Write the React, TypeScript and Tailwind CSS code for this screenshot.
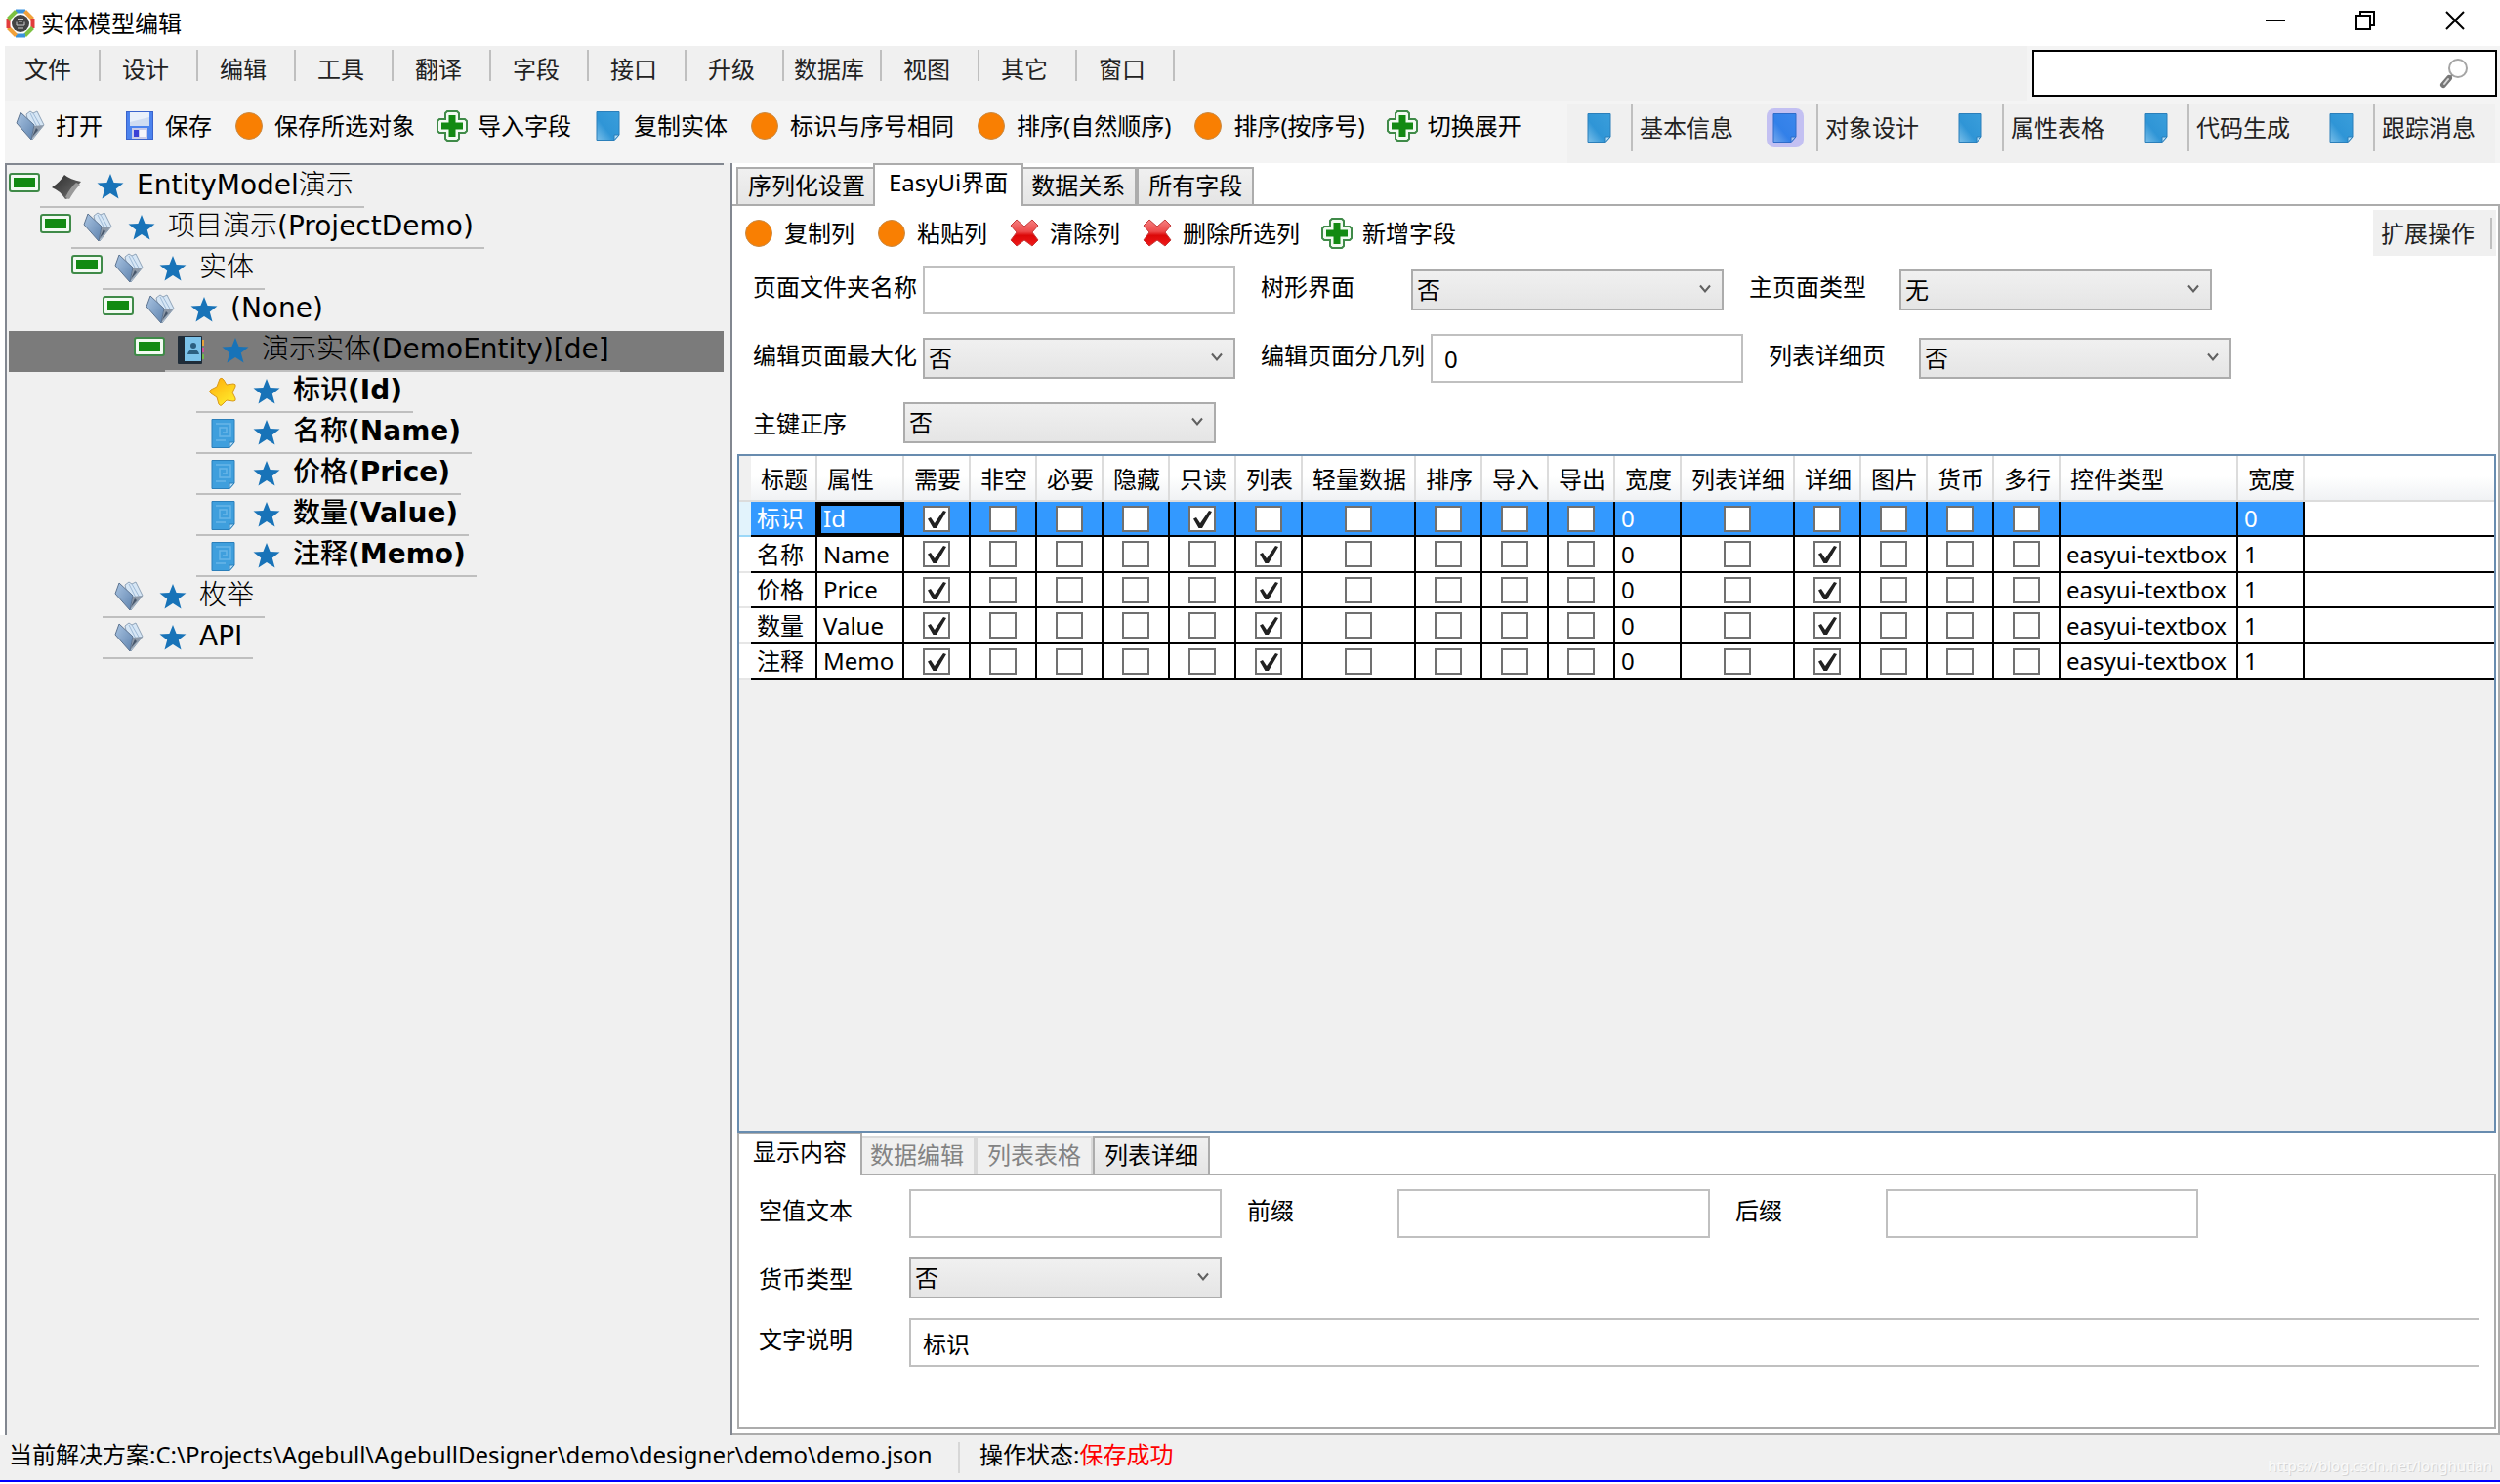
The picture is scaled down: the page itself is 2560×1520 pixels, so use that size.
import { useId, useState } from "react";
import type { ReactNode } from "react";
import { clsx } from "clsx";

type IconProps = { className?: string };

const LogoIcon = () => (
  <svg viewBox="0 0 30 30" className="size-[30px] shrink-0" aria-hidden="true">
    <g fill="none" strokeWidth="4">
      <path d="M10 2.500H20" stroke="#3a93dc" />
      <path d="M19.500 2.500L27.500 10.500" stroke="#f0a03a" />
      <path d="M27.500 10V20" stroke="#e23c3c" />
      <path d="M27.500 19.500L19.500 27.500" stroke="#7cc142" />
      <path d="M20 27.500H10" stroke="#3a93dc" />
      <path d="M10.500 27.500L2.500 19.500" stroke="#f0a03a" />
      <path d="M2.500 20V10" stroke="#e23c3c" />
      <path d="M2.500 10.500L10.500 2.500" stroke="#7cc142" />
    </g>
    <circle cx="15" cy="15" r="9" fill="#444" />
    <path d="M12 10.500H18M11 13.500V17H19V13.500M13 13H17M12 20H18" fill="none" stroke="#c8c8c8" strokeWidth="1" />
  </svg>
);

const FolderIcon = ({ className }: IconProps) => (
  <svg viewBox="0 0 32 32" className={clsx("size-8 shrink-0", className)} aria-hidden="true">
    <defs>
      <linearGradient id="folderCover" x1="0" y1="0" x2="1" y2="1">
        <stop offset="0" stopColor="#a9c4e2" />
        <stop offset="1" stopColor="#5f83ae" />
      </linearGradient>
    </defs>
    <path d="M12 4L16 1L19 3L23 1L30 15L18 30Z" fill="#d6e6f5" stroke="#8fa3b8" strokeWidth="1" />
    <path d="M16 3L24 19M19 3L27 17" stroke="#9db9d6" strokeWidth="1" />
    <path d="M20 16L30 15L17 30Z" fill="#8d99a8" />
    <path d="M22 18L24 20L18 27Z" fill="#46566b" />
    <path d="M6 2L20 15L17 30L2 13Z" fill="url(#folderCover)" stroke="#5d7491" strokeWidth="1" />
  </svg>
);

const SaveIcon = () => (
  <svg viewBox="0 0 32 32" className="size-8 shrink-0" aria-hidden="true">
    <rect x="2.500" y="1.500" width="27" height="28" fill="#4c83ee" stroke="#3a63cc" />
    <rect x="6" y="2" width="20" height="14" fill="#e9f0fb" />
    <path d="M6 12L26 7V16H6Z" fill="#cfdcf2" />
    <rect x="8" y="18" width="16" height="11" fill="#c9cbe9" />
    <rect x="10" y="20" width="5" height="7" fill="#3b3fd6" />
    <rect x="16" y="20" width="6" height="7" fill="#f5f5fb" />
  </svg>
);

const DotIcon = () => (
  <svg viewBox="0 0 32 32" className="size-8 shrink-0" aria-hidden="true">
    <circle cx="16" cy="16" r="13.500" fill="#f97f02" stroke="#c98a45" strokeWidth="1" />
  </svg>
);

const PlusIcon = () => (
  <svg viewBox="0 0 32 32" className="size-8 shrink-0" aria-hidden="true">
    <path
      d="M11 1H21L23 3V9H29L31 11V21L29 23H23V29L21 31H11L9 29V23H3L1 21V11L3 9H9V3Z"
      fill="#f2faf2"
      stroke="#3f8a48"
      strokeWidth="2"
    />
    <path d="M12.500 5H19.500V12.500H27V19.500H19.500V27H12.500V19.500H5V12.500H12.500Z" fill="#128a12" />
  </svg>
);

const CrossIcon = () => (
  <svg viewBox="0 0 32 32" className="size-8 shrink-0" aria-hidden="true">
    <defs>
      <linearGradient id="crossFill" x1="0" y1="0" x2="0" y2="1">
        <stop offset="0" stopColor="#f58080" />
        <stop offset="0.450" stopColor="#ee4a4a" />
        <stop offset="0.600" stopColor="#dc0808" />
        <stop offset="1" stopColor="#f01a1a" />
      </linearGradient>
    </defs>
    <path
      d="M8 2L16 9L24 2L30 8L24 15L30 23L24 29L16 23L8 29L2 23L8 15L2 8Z"
      fill="url(#crossFill)"
      stroke="#c43a3a"
      strokeWidth="1"
      strokeLinejoin="round"
    />
  </svg>
);

const PageIcon = ({ className }: IconProps) => (
  <svg viewBox="0 0 32 32" className={clsx("size-8 shrink-0", className)} aria-hidden="true">
    <defs>
      <linearGradient id="pageFill" x1="0" y1="1" x2="1" y2="0">
        <stop offset="0" stopColor="#7cc0ea" />
        <stop offset="0.400" stopColor="#2f95d6" />
        <stop offset="1" stopColor="#3a9edb" />
      </linearGradient>
    </defs>
    <path d="M4 1.500H27V25L22 30.500H4Z" fill="url(#pageFill)" stroke="#2b7fba" strokeWidth="1" />
    <path d="M22 30.500V25H27Z" fill="#b5dcf4" stroke="#2b7fba" strokeWidth="1" />
  </svg>
);

const NoteIcon = () => (
  <svg viewBox="0 0 32 32" className="size-8 shrink-0" aria-hidden="true">
    <path d="M5 2.500H28V26L23 31.500H5Z" fill="#3f9fdd" stroke="#2b7fba" strokeWidth="1" />
    <path d="M23 31.500V26H28Z" fill="#b5dcf4" stroke="#2b7fba" strokeWidth="1" />
    <path d="M9 7H24V20H13V11H20V16H16M9 24H19" fill="none" stroke="#69b6e8" strokeWidth="1.500" />
  </svg>
);

const SolutionIcon = () => (
  <svg viewBox="0 0 32 32" className="size-8 shrink-0" aria-hidden="true">
    <defs>
      <linearGradient id="solutionFill" x1="0" y1="0" x2="1" y2="1">
        <stop offset="0" stopColor="#2d2d2d" />
        <stop offset="0.600" stopColor="#555" />
        <stop offset="1" stopColor="#8a8a8a" />
      </linearGradient>
    </defs>
    <path d="M14 4Q20 9 31 11Q25 17 19 28L15 29Q9 20 1 17Q9 12 14 4Z" fill="url(#solutionFill)" />
    <path d="M30 14Q25 19 19 29L15 27Q20 17 26 12Z" fill="#9a9a9a" />
  </svg>
);

const BookIcon = () => (
  <svg viewBox="0 0 32 32" className="size-8 shrink-0" aria-hidden="true">
    <path d="M26 5H29V11H26Z" fill="#e8a33a" />
    <path d="M26 13H29V18H26Z" fill="#cf4f9a" />
    <path d="M26 20H29V25H26Z" fill="#76b74a" />
    <rect x="2" y="1" width="25" height="29" rx="1" fill="#1f2c38" />
    <rect x="9" y="2" width="17" height="25" fill="#7cc3ea" />
    <circle cx="18" cy="11" r="3" fill="#2c5f80" />
    <path d="M12 20Q13 15 18 15Q23 15 24 20Z" fill="#2c5f80" />
  </svg>
);

const GoldStarIcon = () => (
  <svg viewBox="0 0 32 32" className="size-8 shrink-0" aria-hidden="true">
    <defs>
      <linearGradient id="goldFill" x1="0" y1="0" x2="0.600" y2="1">
        <stop offset="0" stopColor="#ffab0a" />
        <stop offset="1" stopColor="#ffe82a" />
      </linearGradient>
    </defs>
    <path
      d="M13 3Q15 1 17 4L20 9L27 8Q30 8 29 11L26 17L29 23Q30 26 27 26L20 25L16 29Q14 32 12 29L10 22L4 18Q1 16 4 14L10 11Z"
      fill="url(#goldFill)"
      stroke="#d99a1c"
      strokeWidth="1"
      strokeLinejoin="round"
    />
  </svg>
);

const BlueStarIcon = () => (
  <svg viewBox="0 0 28 28" className="size-7 shrink-0" aria-hidden="true">
    <path d="M14 1L17.600 10L27.500 10.500L19.800 16.600L22.500 26.500L14 21L5.500 26.500L8.200 16.600L0.500 10.500L10.400 10Z" fill="#1873b8" />
  </svg>
);

const CollapseIcon = () => (
  <svg viewBox="0 0 32 20" className="h-5 w-8" aria-hidden="true">
    <rect x="1" y="1" width="30" height="18" rx="2" fill="#f2faf2" stroke="#3f8a48" strokeWidth="2" />
    <rect x="5" y="5" width="22" height="10" fill="#128a12" />
  </svg>
);

const SearchIcon = () => (
  <svg viewBox="0 0 32 34" className="h-[34px] w-8" aria-hidden="true">
    <circle cx="20" cy="12" r="9" fill="#fff" stroke="#a5a5a5" strokeWidth="2" />
    <path d="M14 19L10 23" stroke="#8a8a8a" strokeWidth="2" />
    <path d="M11 22L5 29" stroke="#777" strokeWidth="6" strokeLinecap="round" />
    <path d="M10 23L6 28" stroke="#d8d8d8" strokeWidth="2" strokeLinecap="round" />
  </svg>
);

const menus = ["文件", "设计", "编辑", "工具", "翻译", "字段", "接口", "升级", "数据库", "视图", "其它", "窗口"];

const mainActions = [
  { text: "打开", icon: <FolderIcon /> },
  { text: "保存", icon: <SaveIcon /> },
  { text: "保存所选对象", icon: <DotIcon /> },
  { text: "导入字段", icon: <PlusIcon /> },
  { text: "复制实体", icon: <PageIcon /> },
  { text: "标识与序号相同", icon: <DotIcon /> },
  { text: "排序(自然顺序)", icon: <DotIcon /> },
  { text: "排序(按序号)", icon: <DotIcon /> },
  { text: "切换展开", icon: <PlusIcon /> },
];

const views = ["基本信息", "对象设计", "属性表格", "代码生成", "跟踪消息"];

const columnActions = [
  { text: "复制列", icon: <DotIcon /> },
  { text: "粘贴列", icon: <DotIcon /> },
  { text: "清除列", icon: <CrossIcon /> },
  { text: "删除所选列", icon: <CrossIcon /> },
  { text: "新增字段", icon: <PlusIcon /> },
];

const tree = [
  { indent: "pl-0", label: "", latin: "EntityModel", tail: "演示", icon: <SolutionIcon />, open: true },
  { indent: "pl-8", label: "项目演示", latin: "(ProjectDemo)", icon: <FolderIcon />, open: true },
  { indent: "pl-16", label: "实体", latin: "", icon: <FolderIcon />, open: true },
  { indent: "pl-24", label: "", latin: "(None)", icon: <FolderIcon />, open: true, plain: true },
  { indent: "pl-32", label: "演示实体", latin: "(DemoEntity)[de]", icon: <BookIcon />, open: true, selected: true },
  { indent: "pl-40", label: "标识", latin: "(Id)", icon: <GoldStarIcon />, field: true },
  { indent: "pl-40", label: "名称", latin: "(Name)", icon: <NoteIcon />, field: true },
  { indent: "pl-40", label: "价格", latin: "(Price)", icon: <NoteIcon />, field: true },
  { indent: "pl-40", label: "数量", latin: "(Value)", icon: <NoteIcon />, field: true },
  { indent: "pl-40", label: "注释", latin: "(Memo)", icon: <NoteIcon />, field: true },
  { indent: "pl-16", label: "枚举", latin: "", icon: <FolderIcon /> },
  { indent: "pl-16", label: "", latin: "API", icon: <FolderIcon /> },
];

const columns = [
  { key: "caption", title: "标题", width: "w-[68px]" },
  { key: "name", title: "属性", width: "w-[89px]" },
  { key: "need", title: "需要", width: "w-[68px]", check: true },
  { key: "notNull", title: "非空", width: "w-[68px]", check: true },
  { key: "required", title: "必要", width: "w-[68px]", check: true },
  { key: "hidden", title: "隐藏", width: "w-[68px]", check: true },
  { key: "readonly", title: "只读", width: "w-[68px]", check: true },
  { key: "list", title: "列表", width: "w-[68px]", check: true },
  { key: "light", title: "轻量数据", width: "w-[116px]", check: true },
  { key: "sort", title: "排序", width: "w-[68px]", check: true },
  { key: "import", title: "导入", width: "w-[68px]", check: true },
  { key: "export", title: "导出", width: "w-[68px]", check: true },
  { key: "listWidth", title: "宽度", width: "w-[68px]" },
  { key: "listDetail", title: "列表详细", width: "w-[116px]", check: true },
  { key: "detail", title: "详细", width: "w-[68px]", check: true },
  { key: "image", title: "图片", width: "w-[68px]", check: true },
  { key: "money", title: "货币", width: "w-[68px]", check: true },
  { key: "multiLine", title: "多行", width: "w-[68px]", check: true },
  { key: "control", title: "控件类型", width: "w-[182px]" },
  { key: "span", title: "宽度", width: "w-[68px]" },
];

const rows = [
  { caption: "标识", name: "Id", listWidth: "0", control: "", span: "0", checked: ["need", "readonly"] },
  { caption: "名称", name: "Name", listWidth: "0", control: "easyui-textbox", span: "1", checked: ["need", "list", "detail"] },
  { caption: "价格", name: "Price", listWidth: "0", control: "easyui-textbox", span: "1", checked: ["need", "list", "detail"] },
  { caption: "数量", name: "Value", listWidth: "0", control: "easyui-textbox", span: "1", checked: ["need", "list", "detail"] },
  { caption: "注释", name: "Memo", listWidth: "0", control: "easyui-textbox", span: "1", checked: ["need", "list", "detail"] },
];

const ActionButton = ({ icon, text }: { icon: ReactNode; text: string }) => (
  <button type="button" className="flex items-center gap-[10px] whitespace-nowrap">
    {icon}
    <span>{text}</span>
  </button>
);

type Tab = { text: string; disabled?: boolean };

const TabStrip = ({ tabs, initial }: { tabs: Tab[]; initial: number }) => {
  const [active, setActive] = useState(initial);

  return (
    <div role="tablist" className="relative z-10 flex h-[42px] shrink-0 items-end pl-1">
      {tabs.map((tab, i) => (
        <button
          key={tab.text}
          type="button"
          role="tab"
          aria-selected={i === active}
          disabled={tab.disabled}
          onClick={() => setActive(i)}
          className={clsx(
            "border-2 border-b-0 whitespace-nowrap",
            i === active && "relative z-10 -mx-1 -mb-[2px] h-11 border-[#acacac] bg-white px-[14px] pb-[6px]",
            i !== active && "h-[38px] px-[10px] pb-[2px]",
            i !== active && !tab.disabled && "border-[#acacac] bg-linear-to-b from-[#f0f0f0] to-[#e5e5e5]",
            tab.disabled && "border-[#d9d9d9] bg-[#f0f0f0] text-[#838383]"
          )}
        >
          {tab.text}
        </button>
      ))}
    </div>
  );
};

const Field = ({ label, children }: { label: string; children: (id: string) => ReactNode }) => {
  const id = useId();
  return (
    <div className="flex items-center">
      <label htmlFor={id} className="min-w-[154px] self-start pt-[6px] pr-[6px] whitespace-nowrap">
        {label}
      </label>
      {children(id)}
    </div>
  );
};

const TextField = ({ label, value = "" }: { label: string; value?: string }) => (
  <Field label={label}>
    {(id) => (
      <input id={id} type="text" defaultValue={value} className="h-[50px] w-80 border-2 border-[#c0c0c0] bg-white px-3 outline-none" />
    )}
  </Field>
);

const SelectField = ({ label, value }: { label: string; value: string }) => (
  <Field label={label}>
    {(id) => (
      <div className="relative">
        <select
          id={id}
          defaultValue={value}
          className="block h-[42px] w-80 appearance-none border-2 border-[#acacac] bg-linear-to-b from-[#f0f0f0] to-[#e5e5e5] px-1 outline-none"
        >
          <option>{value}</option>
        </select>
        <svg viewBox="0 0 12 10" className="pointer-events-none absolute top-[15px] right-[13px] h-[10px] w-3" aria-hidden="true">
          <path d="M1 1.500L6 7.500L11 1.500" fill="none" stroke="#606060" strokeWidth="2" />
        </svg>
      </div>
    )}
  </Field>
);

const CheckBox = ({ label, checked }: { label: string; checked: boolean }) => (
  <span className="relative mx-auto block h-[27px] w-7">
    <input
      type="checkbox"
      aria-label={label}
      defaultChecked={checked}
      className="peer block h-[27px] w-7 appearance-none border-2 border-[#707070] bg-white"
    />
    <svg viewBox="0 0 28 27" className="pointer-events-none absolute inset-0 hidden peer-checked:block" aria-hidden="true">
      <path d="M5 13.500L8 12L12 18L21 5L24 6L14 23H10.500Z" fill="#212121" />
    </svg>
  </span>
);

const TreePanel = () => (
  <aside className="flex w-[743px] shrink-0 bg-[#f0f0f0] pr-[7px]">
    <ul className="flex-1 border-t-2 border-l-2 border-[#828790] pt-[2px] pl-[2px] font-['DejaVu_Sans','Noto_Sans_CJK_SC',sans-serif] text-[28px] leading-8">
      {tree.map((node) => (
        <li key={node.label + node.latin} className={clsx("flex h-[42px]", node.indent, node.selected && "bg-[#7b7b7b]")}>
          <span className="w-8 shrink-0 pt-[6px]">
            {node.open && (
              <button type="button" aria-label="折叠" className="block">
                <CollapseIcon />
              </button>
            )}
          </span>
          <div className={clsx("flex items-center border-b-2 pr-[11px] pl-[11px]", node.plain ? "border-transparent" : "border-[#bfbfbf]")}>
            {node.icon}
            <span className="pr-[13px] pl-[15px]">
              <BlueStarIcon />
            </span>
            <span className="pb-[2px] whitespace-nowrap">
              {node.label && <span className={clsx(node.field ? "font-medium" : "font-light")}>{node.label}</span>}
              {node.latin && <span className={clsx(node.field && "font-bold")}>{node.latin}</span>}
              {node.tail && <span className="font-light">{node.tail}</span>}
            </span>
          </div>
        </li>
      ))}
    </ul>
  </aside>
);

const FieldGrid = () => (
  <div className="flex-1 border-2 border-[#688caf] bg-[#f0f0f0]">
    <table className="w-full table-fixed border-separate border-spacing-0 text-left leading-7">
      <colgroup>
        <col className="w-3" />
        {columns.map((col) => (
          <col key={col.key} className={col.width} />
        ))}
        <col />
      </colgroup>
      <thead>
        <tr className="h-[47px]">
          <th className="border-b-2 border-[#dcdcdc] bg-[#f0f0f0] p-0" aria-label="行" />
          {columns.map((col) => (
            <th
              key={col.key}
              scope="col"
              className="border-r-2 border-b-2 border-[#dcdcdc] bg-linear-to-b from-white from-45% to-[#f0f2f4] p-0 pt-[2px] pl-[10px] font-normal whitespace-nowrap"
            >
              {col.title}
            </th>
          ))}
          <th className="border-b-2 border-[#dcdcdc] bg-linear-to-b from-white from-45% to-[#f0f2f4] p-0" aria-label="空" />
        </tr>
      </thead>
      <tbody>
        {rows.map((row, i) => (
          <tr key={row.name} className={clsx("h-9 even:h-[37px]", i === 0 ? "text-white" : "text-black")}>
            <td className={clsx("border-b-2 p-0", i === 0 ? "border-[#9cd8f8] bg-[#e2f3fc]" : "border-[#e6e6e6] bg-white")} />
            {columns.map((col) => (
              <td
                key={col.key}
                className={clsx(
                  "border-r-2 border-b-2 border-black p-0 whitespace-nowrap",
                  i === 0 ? "bg-[#3399ff]" : "bg-white",
                  i === 0 && col.key === "name" && "outline-4 -outline-offset-4 outline-black",
                  !col.check && "pl-[6px]"
                )}
              >
                {col.check ? (
                  <CheckBox label={`${row.caption} ${col.title}`} checked={row.checked.includes(col.key)} />
                ) : (
                  row[col.key as "caption" | "name" | "listWidth" | "control" | "span"]
                )}
              </td>
            ))}
            <td className="border-b-2 border-black bg-white p-0" />
          </tr>
        ))}
      </tbody>
    </table>
  </div>
);

const DetailPanel = () => (
  <section>
    <TabStrip
      initial={0}
      tabs={[{ text: "显示内容" }, { text: "数据编辑", disabled: true }, { text: "列表表格", disabled: true }, { text: "列表详细" }]}
    />
    <div className="flex flex-col gap-5 border-2 border-[#acacac] pt-[14px] pb-[62px] pl-5">
      <div className="flex flex-wrap gap-x-[26px]">
        <TextField label="空值文本" />
        <TextField label="前缀" />
        <TextField label="后缀" />
      </div>
      <SelectField label="货币类型" value="否" />
      <div className="flex items-center pr-[15px]">
        <label htmlFor="remark" className="min-w-[154px] self-start pt-[6px] pr-[6px]">
          文字说明
        </label>
        <input
          id="remark"
          type="text"
          defaultValue="标识"
          className="h-[50px] min-w-0 flex-1 border-2 border-r-0 border-[#c0c0c0] bg-white px-3 outline-none"
        />
      </div>
    </div>
  </section>
);

const App = () => {
  return (
    <div className="flex min-h-screen flex-col bg-white pb-[2px] font-['Noto_Sans','Noto_Sans_CJK_SC',sans-serif] text-[24px] leading-8 text-black">
      <header className="flex h-[47px] items-center gap-[6px] pl-[6px]">
        <LogoIcon />
        <h1>实体模型编辑</h1>
        <div className="ml-auto flex h-full items-start pt-[11px]">
          <button type="button" aria-label="最小化" className="flex w-[92px] justify-center">
            <svg viewBox="0 0 20 20" className="size-5" aria-hidden="true">
              <path d="M0 10H20" stroke="#000" strokeWidth="2" />
            </svg>
          </button>
          <button type="button" aria-label="还原" className="flex w-[92px] justify-center">
            <svg viewBox="0 0 20 20" className="size-5" aria-hidden="true">
              <path d="M1 5H15V19H1ZM5 5V1H19V15H15" fill="none" stroke="#000" strokeWidth="2" />
            </svg>
          </button>
          <button type="button" aria-label="关闭" className="flex w-[92px] justify-center">
            <svg viewBox="0 0 20 20" className="size-5" aria-hidden="true">
              <path d="M1 1L19 19M19 1L1 19" stroke="#000" strokeWidth="2" />
            </svg>
          </button>
        </div>
      </header>

      <div className="ml-[5px] flex bg-[#f4f4f4]">
        <nav className="flex h-14 flex-1 items-start bg-[#f0f0f0] pt-1 text-[#222]">
          {menus.map((menu) => (
            <div key={menu} className="flex h-8 items-center">
              <button type="button" className="w-[88px] pt-2 text-center whitespace-nowrap">
                {menu}
              </button>
              <span className="mr-[2px] ml-2 h-8 w-[2px] bg-[#bfbfbf]" />
            </div>
          ))}
        </nav>
        <div className="pt-1 pr-[3px] pl-[5px]">
          <div className="flex h-12 w-[476px] items-center border-2 border-black bg-white pr-[26px]">
            <input type="search" aria-label="搜索" className="h-full min-w-0 flex-1 px-2 outline-none" />
            <button type="button" aria-label="查找">
              <SearchIcon />
            </button>
          </div>
        </div>
      </div>

      <div className="ml-[5px] flex h-16 items-start bg-[#f4f4f4]">
        <div className="flex gap-[22px] pt-[10px] pl-[10px]">
          {mainActions.map((action) => (
            <ActionButton key={action.text} {...action} />
          ))}
        </div>
        <div className="mt-1 mr-[5px] ml-auto flex h-[60px] bg-[#f0f0f0] text-[#222]">
          {views.map((view, i) => (
            <button key={view} type="button" className="flex h-12 w-[190px] items-center whitespace-nowrap">
              <span className="flex w-[65px] justify-center">
                <span className={clsx("rounded-lg px-[3px] py-1", i === 1 && "bg-[#c3c0f2]")}>
                  <PageIcon className={clsx(i === 1 && "brightness-90 hue-rotate-15 saturate-125")} />
                </span>
              </span>
              <span className="mr-[7px] h-12 w-[2px] bg-[#bfbfbf]" />
              {view}
            </button>
          ))}
        </div>
      </div>

      <main className="ml-[5px] flex flex-1">
        <TreePanel />
        <div className="flex min-w-0 flex-1 flex-col border-l-2 border-[#828790] bg-white">
          <TabStrip initial={1} tabs={[{ text: "序列化设置" }, { text: "EasyUi界面" }, { text: "数据关系" }, { text: "所有字段" }]} />
          <div className="flex flex-1 flex-col border-2 border-l-0 border-[#acacac] pr-[2px] pb-1 pl-[5px]">
            <div className="mt-1 flex h-[47px] items-center gap-[22px] pl-[6px]">
              {columnActions.map((action) => (
                <ActionButton key={action.text} {...action} />
              ))}
              <div className="ml-auto flex h-full items-center gap-4 bg-[#f0f0f0] pr-1 pl-2 text-[#222]">
                <button type="button">扩展操作</button>
                <span className="h-8 w-[2px] bg-[#bfbfbf]" />
              </div>
            </div>
            <form className="mt-[10px] mb-[11px] flex flex-col gap-5 pl-4">
              <div className="flex flex-wrap gap-x-[26px]">
                <TextField label="页面文件夹名称" />
                <SelectField label="树形界面" value="否" />
                <SelectField label="主页面类型" value="无" />
              </div>
              <div className="flex flex-wrap gap-x-[26px]">
                <SelectField label="编辑页面最大化" value="否" />
                <TextField label="编辑页面分几列" value="0" />
                <SelectField label="列表详细页" value="否" />
              </div>
              <SelectField label="主键正序" value="否" />
            </form>
            <FieldGrid />
            <DetailPanel />
          </div>
        </div>
      </main>

      <footer className="flex h-12 items-center border-b-2 border-[#0000ff] bg-[#f0f0f0] pl-[9px]">
        <span className="min-w-[966px] pb-[6px]">当前解决方案:C:\Projects\Agebull\AgebullDesigner\demo\designer\demo\demo.json</span>
        <span className="mr-5 ml-[6px] h-8 w-[2px] bg-[#d7d7d7]" />
        <span className="pb-[6px]">
          操作状态:<span className="text-[#ff0000]">保存成功</span>
        </span>
        <span className="mt-4 mr-2 ml-auto text-[15px] leading-5 text-[#fafafa] [text-shadow:1px_1px_0_#d4d4d4]">
          https://blog.csdn.net/longhutian
        </span>
      </footer>
    </div>
  );
};

export default App;
